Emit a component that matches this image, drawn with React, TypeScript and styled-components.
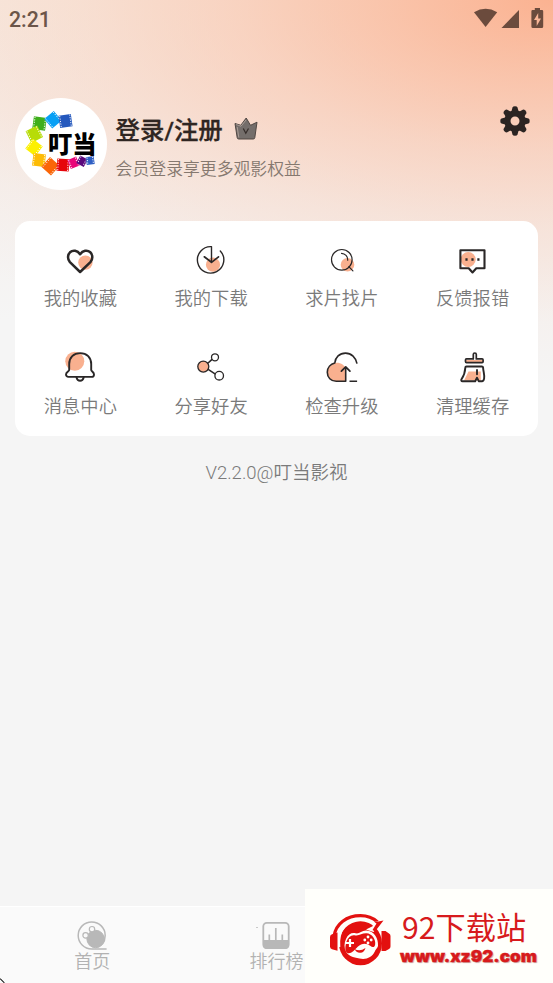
import React from 'react';
import styled, { createGlobalStyle } from 'styled-components';

const INK = '#2a2727';
const PEACH = '#f9b08f';

const GlobalStyle = createGlobalStyle`
  * { box-sizing: border-box; }
  html, body { margin: 0; padding: 0; }
  body { font-family: Roboto, "Noto Sans CJK SC", sans-serif; background: #f5f5f5; overflow: hidden; }
  svg { display: block; flex: none; overflow: visible; }
`;

const Screen = styled.div`
  position: relative;
  display: flex;
  flex-direction: column;
  width: 553px;
  height: 983px;
  overflow: hidden;
  background:
    radial-gradient(ellipse 790px 385px at 550px 0px,
      rgba(252, 164, 125, 0.8) 0%,
      rgba(251, 176, 142, 0.67) 20%,
      rgba(250, 190, 163, 0.53) 40%,
      rgba(248, 206, 186, 0.4) 60%,
      rgba(246, 226, 216, 0.2) 84%,
      rgba(245, 245, 245, 0) 100%),
    linear-gradient(180deg, #f7ebe2 0, #f6ece6 110px, #f5f1ef 210px, #f5f5f5 320px);
`;

const StatusBar = styled.div`
  display: flex;
  justify-content: space-between;
  height: 40px;
  padding: 0 9px;
  color: #6b5549;
`;

const Clock = styled.span`
  font-size: 21.3px;
  font-weight: 500;
  line-height: 39px;
`;

const Profile = styled.header`
  display: flex;
  align-items: flex-start;
  height: 123px;
  margin-top: 58px;
  padding: 0 23px 0 15px;
`;

const Avatar = styled.div`
  width: 92px;
  height: 92px;
  border-radius: 50%;
  background: #fff;
  overflow: hidden;
`;

const Account = styled.div`
  flex: 1;
  padding: 12px 0 0 8.6px;
`;

const NameRow = styled.div`
  display: flex;
  align-items: center;
  gap: 11px;
  height: 36px;
  color: #2f2622;
  font-size: 24.4px;
  font-weight: 500;
  -webkit-text-stroke: 0.3px #2f2622;
  white-space: nowrap;
`;

const Hint = styled.div`
  margin-top: 10px;
  height: 26px;
  line-height: 26px;
  font-size: 16.85px;
  font-weight: 350;
  color: #85786f;
`;

const SettingsSlot = styled.div`
  padding-top: 8px;
`;

const Card = styled.section`
  display: grid;
  grid-template-columns: repeat(4, 1fr);
  grid-template-rows: repeat(2, 107.5px);
  width: 523px;
  height: 215px;
  margin: 0 15px;
  border-radius: 15px;
  background: #fff;
`;

const Action = styled.div`
  display: flex;
  flex-direction: column;
  align-items: center;
  padding-top: 23.5px;
`;

const ActionLabel = styled.span`
  margin-top: 11.5px;
  line-height: 26px;
  font-size: 18.3px;
  font-weight: 350;
  color: #7a7a7a;
`;

const Version = styled.div`
  margin-top: 23px;
  line-height: 28px;
  text-align: center;
  font-size: 18.5px;
  font-weight: 350;
  color: #7a7a7a;
`;

const TabBar = styled.nav`
  display: grid;
  grid-template-columns: repeat(3, 1fr);
  height: 77px;
  margin-top: auto;
  border-top: 1px solid #fff;
  background: #fafafa;
`;

const Tab = styled.div`
  display: flex;
  flex-direction: column;
  align-items: center;
  padding-top: 14px;
  font-size: 18px;
  font-weight: 350;
  line-height: 22px;
  color: #b2b2b2;
`;

const Banner = styled.aside`
  position: absolute;
  right: 0;
  bottom: 0;
  display: flex;
  width: 248px;
  height: 94px;
  padding: 25px 0 0 25px;
  background: #fffffb;
  color: #d71a1c;
`;

const BannerText = styled.div`
  display: flex;
  flex-direction: column;
  padding-left: 9px;
`;

const SiteName = styled.div`
  margin-top: -5px;
  padding-left: 2px;
  font-family: "Noto Sans CJK SC", sans-serif;
  font-size: 30.2px;
  line-height: 34px;
  white-space: nowrap;
`;

const SiteUrl = styled.div`
  width: max-content;
  margin-top: 4px;
  font-family: Inter, sans-serif;
  font-size: 16px;
  font-weight: 900;
  line-height: 18px;
  -webkit-text-stroke: 0.4px #d71a1c;
  text-shadow: 1px 1px 1px #c9a9a5;
  transform: scaleX(1.07);
  transform-origin: left;
`;

const CornerMark = styled.div`
  position: absolute;
  left: 0;
  bottom: 0;
`;

const stroke = { fill: 'none', stroke: INK, strokeLinecap: 'round', strokeLinejoin: 'round' } as const;

const Glyph = ({ children }: { children: React.ReactNode }) => (
  <svg width="30" height="30" viewBox="0 0 30 30">{children}</svg>
);

const HeartIcon = () => (
  <Glyph>
    <circle cx="20.4" cy="17.6" r="7.2" fill={PEACH} />
    <path {...stroke} strokeWidth="2.5" d="M15.1 27 4.9 17.2C2.2 14.2 2.6 9.6 5 7.3c3-2.7 7.4-2 10.1 2 2.7-4 7.2-4.7 10.2-2 2.5 2.3 2.8 6.9.1 9.9z" />
  </Glyph>
);

const DownloadIcon = () => (
  <Glyph>
    <circle cx="17" cy="19.7" r="7.1" fill={PEACH} />
    <path {...stroke} strokeWidth="1.4" d="M15.5 1.7A13.2 13.2 0 1 0 24.3 5.9M15.5 1.7V17" />
    <path {...stroke} strokeWidth="1.7" d="m8.3 11.8 7.2 5.5 7-5.5" />
  </Glyph>
);

const SearchIcon = () => (
  <Glyph>
    <circle cx="20.5" cy="19.8" r="6.8" fill={PEACH} />
    <circle {...stroke} strokeWidth="1.2" cx="14.8" cy="14.8" r="10.3" />
    <path {...stroke} strokeWidth="1.2" d="M14.5 8.3a6.5 6.5 0 0 1 6.2 6.9M21.8 21.7l4.1 4.2" />
  </Glyph>
);

const FeedbackIcon = () => (
  <Glyph>
    <circle cx="10.2" cy="14.5" r="7.5" fill={PEACH} />
    <path {...stroke} strokeWidth="2.1" d="M2.4 5.2h24.1v18.1h-8.2l-3.8 4.2-3.8-4.2H2.4z" />
    <path stroke={INK} strokeWidth="2.5" d="M7.4 14.5h2.2M13.4 14.5h2.2M19.3 14.5h2.2" />
  </Glyph>
);

const BellIcon = () => (
  <Glyph>
    <circle cx="9.8" cy="9.3" r="9.5" fill={PEACH} />
    <path {...stroke} strokeWidth="1.9" d="M4.2 18v-6C4.2 5.6 8.6 1.1 15.2 1.1S26.2 5.6 26.2 12v6c0 1.2 2.8 2.2 2.8 4.4 0 1.4-1 2.5-2.4 2.5H3.4C2 24.9 1 23.8 1 22.4 1 20.2 4.2 19.2 4.2 18z" />
    <path {...stroke} strokeWidth="1.9" d="M11.5 25.5c.5 2 1.8 3.3 3.6 3.3s3.1-1.3 3.6-3.3" />
  </Glyph>
);

const ShareIcon = () => (
  <Glyph>
    <path {...stroke} strokeWidth="1.6" d="m11.5 11.5 4.3-3.8M11.8 17.2l7.2 4.6" />
    <circle cx="7.3" cy="14.6" r="5.5" fill={PEACH} stroke={INK} strokeWidth="1.3" />
    <circle {...stroke} strokeWidth="1.3" cx="19" cy="5.3" r="3.5" />
    <circle {...stroke} strokeWidth="1.3" cx="23.2" cy="23.7" r="4.3" />
  </Glyph>
);

const UpgradeIcon = () => (
  <Glyph>
    <path fill={PEACH} d="M9.7 10.8c4.5 0 8.2 2.5 9.1 6.4v12H9.7A9.2 9.2 0 0 1 9.7 10.8z" />
    <path {...stroke} strokeLinecap="butt" strokeWidth="1.6" d="M30 11.7C29 5.6 24.3 1.1 18.5 1.1 12.5 1.1 8.3 5.2 7.8 11 3.6 12 .3 15.6.3 20.2c0 5.3 3.7 9.1 8.9 9.1h9.5V15.5M22.5 29.3h7.6" />
    <path {...stroke} strokeWidth="1.8" d="m14.4 19.1 4.3-4.2 4.2 4.2" />
  </Glyph>
);

const BroomIcon = () => (
  <Glyph>
    <path fill={PEACH} d="M8 8h17v2.6H8zM10.5 19.5h12.3v9H6z" />
    <path {...stroke} strokeWidth="1.7" d="M15.3 6.9V2.5q0-1.5 1.5-1.5t1.5 1.5v4.4h5.8q1 0 1 1v1.7q0 1-1 1H8.5q-1 0-1-1V7.9q0-1 1-1z" />
    <path {...stroke} strokeWidth="1.9" d="M8.5 14.5h15.3q1.2 0 1.3 1.2c.2 3.9 1.7 7.2 1 10.9-.3 1.7-.9 2.6-2.1 2.6h-3.3l-1.7-3.5-1.8 3.5H4.5c-1.300 0-1.500-1-1-1.900 2.100-3.200 3.600-6.900 3.800-11.600q0-1.200 1.200-1.200zM19 18v4.200" />
  </Glyph>
);

const filmFrames = [
  { x: 24.5, y: 25.5, s: 12, a: 8, c: '#3faf1c' },
  { x: 38, y: 21.7, s: 11.5, a: -40, c: '#08a0f5' },
  { x: 50.5, y: 23, s: 11.5, a: -8, c: '#2458bd' },
  { x: 19.3, y: 36.2, s: 12, a: -27, c: '#b7dc08' },
  { x: 19, y: 49.5, s: 11.5, a: 38, c: '#fcf000' },
  { x: 24, y: 62, s: 11.5, a: 7, c: '#fdbb05' },
  { x: 35.5, y: 68.3, s: 12, a: 42, c: '#fa6608' },
  { x: 48, y: 67, s: 11.2, a: 4, c: '#e6060c' },
  { x: 58.5, y: 64.8, s: 8.5, a: -22, c: '#e90478' },
  { x: 67, y: 63.2, s: 7.5, a: 28, c: '#5a087c' },
  { x: 75.2, y: 62.6, s: 7, a: -8, c: '#2e5fc4' },
];

const LogoText = styled.text`
  font-family: "Noto Sans CJK SC", sans-serif;
  font-size: 24px;
  font-weight: 900;
`;

const AvatarLogo = () => (
  <svg width="92" height="92" viewBox="0 0 92 92">
    {filmFrames.map((f) => (
      <g key={f.x} transform={`translate(${f.x} ${f.y}) rotate(${f.a})`}>
        <rect x={-f.s / 2 - 0.5} y={-f.s / 2 - 0.5} width={f.s + 1} height={f.s + 1} fill={f.c} />
        <path
          d={`M${-f.s / 2 + 0.7} ${-f.s / 2}V${f.s / 2}M${f.s / 2 - 0.7} ${-f.s / 2}V${f.s / 2}`}
          stroke="#fff"
          strokeWidth="0.9"
          strokeDasharray="1.2 1.3"
        />
      </g>
    ))}
    <LogoText x="33" y="54.5" textLength="48.5" lengthAdjust="spacingAndGlyphs">叮当</LogoText>
  </svg>
);

const CrownIcon = () => (
  <svg width="24" height="23" viewBox="0 0 24 23">
    <path d="M1 6.5 6.8 8.3 12.2 1l4.3 7.3L23 5.2l-2.2 15.5q-.2 1.3-1.5 1.3H4.7q-1.3 0-1.5-1.3z" fill="#746e6b" stroke="#504743" strokeWidth="1" strokeLinejoin="round" />
    <path d="M2.2 7.5 7 9.2 12 3M3.2 10l1.6 10.5" fill="none" stroke="#b9aaa2" strokeWidth=".8" />
    <path d="m9.3 11.5 2.5 4.8 2.7-4.8" fill="none" stroke="#352d2a" strokeWidth="1.2" />
  </svg>
);

const GearIcon = () => (
  <svg width="30" height="30" viewBox="-15 -15 30 30">
    <circle r="7.6" fill="none" stroke="#2b2422" strokeWidth="6.2" />
    {[0, 45, 90, 135, 180, 225, 270, 315].map((a) => (
      <path key={a} transform={`rotate(${a})`} d="M-3.8-8.8-2.5-13.5Q-2.1-14.7 0-14.7T2.5-13.5L3.8-8.8z" fill="#2b2422" />
    ))}
  </svg>
);

const StatusIcons = () => (
  <svg width="73" height="40" viewBox="471 0 73 40" fill="#6b4b3d">
    <path d="M474 12.2Q485.6 5.5 497.2 12.2L485.6 27z" />
    <path d="M519 10v18h-17.5z" />
    <path fillRule="evenodd" d="M534.8 8h5.2v2h2q1.200 0 1.200 1.200v15.300q0 1.500-1.500 1.500h-8.800q-1.500 0-1.500-1.500V11.200q0-1.200 1.200-1.200h2.200zM538.200 13l-4.200 7h2.700v6l4.300-7.500h-2.800z" />
  </svg>
);

const ReelIcon = () => (
  <svg width="30" height="30" viewBox="0 0 30 30" fill="none" stroke="#b8b8b8">
    <path strokeWidth="1.5" d="M29.6 27.9H14.7a13.5 13.5 0 1 1 13.5-13.5c0 3.5-1.1 6.5-3 9" />
    <circle cx="18.6" cy="18" r="8.7" fill="#b8b8b8" />
    <circle cx="15" cy="8.2" r="2.7" fill="#fafafa" strokeWidth="1.2" />
    <circle cx="8.6" cy="14.4" r="2.7" fill="#fafafa" strokeWidth="1.2" />
  </svg>
);

const RankIcon = () => (
  <svg width="30" height="30" viewBox="0 0 30 30" fill="none" stroke="#b8b8b8">
    <rect x="2.3" y="1.8" width="25.4" height="25.3" rx="3.5" strokeWidth="1.8" />
    <path d="M2 19h26v5q0 4-4 4H6q-4 0-4-4z" fill="#b8b8b8" stroke="none" />
    <path strokeWidth="1.7" d="M8.3 19v-5.5M14.8 19V7M21.3 19v-5.5" />
    <circle cx="-4" cy="6.5" r=".5" fill="#777" stroke="none" />
  </svg>
);

const GamepadLogo = () => (
  <svg width="61" height="52" viewBox="0 0 61 52">
    <ellipse cx="30.5" cy="29.3" rx="21.5" ry="22" fill="#e3110f" />
    <path d="M9 33C7.5 17 15.5 5.5 30.5 5.5c6 0 10.5 1.5 14 4.5" fill="none" stroke="#fffffb" strokeWidth="2.6" />
    <path d="M4 22C6 9.5 16.5 1.7 30.5 1.7c7 0 12.5 2.2 17 6.3" fill="none" stroke="#e3110f" strokeWidth="3.2" />
    <path d="M36 15.5 43 12l-2-3.5L54 6.5 43.5 18z" fill="#fffffb" />
    <path d="m42.5 16 4-6.5-2-1.200L53.500 6.500 45 17.500z" fill="#e3110f" />
    <path d="M7.5 18.5v18.2L2 35.2Q0 34.5 0 32.5V23q0-2 2-2.7z" fill="#e3110f" />
    <path d="M51.5 17h4l3.500 2.500q1.500.8 1.500 2.500v10.500q0 1.700-1.500 2.500L55.500 37h-4z" fill="#e3110f" />
    <path d="M16 25c2-5 6-6.700 9.500-5.700 4 1 6-3.100 11-2.800 7.500.5 12 7.500 11.500 15.500-.5 2.500-2.500 3.300-3.200 5.500C42 43.500 36 46 29.500 44.500 23 43.500 18 41.500 16 37.500 14 34 14 29 16 25z" fill="#fffffb" />
    <path d="M16.500 27.500C18 23 21 20.700 24.500 21.200c5 1 7-2.200 12-2 5.500.3 9.300 6 8.700 11-.5 3.600-2.900 3.500-5 1.500-4-3-8.500-2.700-12.500 1-3.700 3.800-7.200 8-10.700 6-2.500-2-1.700-6.700-.5-11.200z" fill="#e3110f" />
    <path d="M20 25v8M16 29h8" stroke="#fffffb" strokeWidth="2.2" />
    <g fill="#fffffb"><circle cx="38" cy="23" r="1.4" /><circle cx="34.8" cy="26" r="1.4" /><circle cx="41.2" cy="26" r="1.4" /><circle cx="38" cy="29" r="1.4" /></g>
    <path d="M24.5 35q5.500 3 11-1-1.500 5-5.500 4.700-4 0-5.500-3.700z" fill="#e3110f" />
  </svg>
);

const actions = [
  { label: '我的收藏', Icon: HeartIcon },
  { label: '我的下载', Icon: DownloadIcon },
  { label: '求片找片', Icon: SearchIcon },
  { label: '反馈报错', Icon: FeedbackIcon },
  { label: '消息中心', Icon: BellIcon },
  { label: '分享好友', Icon: ShareIcon },
  { label: '检查升级', Icon: UpgradeIcon },
  { label: '清理缓存', Icon: BroomIcon },
];

export default function App() {
  return (
    <Screen lang="zh-CN">
      <GlobalStyle />
      <StatusBar>
        <Clock>2:21</Clock>
        <StatusIcons />
      </StatusBar>
      <Profile>
        <Avatar><AvatarLogo /></Avatar>
        <Account>
          <NameRow><span>登录/注册</span><CrownIcon /></NameRow>
          <Hint>会员登录享更多观影权益</Hint>
        </Account>
        <SettingsSlot><GearIcon /></SettingsSlot>
      </Profile>
      <Card>
        {actions.map(({ label, Icon }) => (
          <Action key={label}>
            <Icon />
            <ActionLabel>{label}</ActionLabel>
          </Action>
        ))}
      </Card>
      <Version>V2.2.0@叮当影视</Version>
      <TabBar>
        <Tab><ReelIcon />首页</Tab>
        <Tab><RankIcon />排行榜</Tab>
      </TabBar>
      <Banner>
        <GamepadLogo />
        <BannerText>
          <SiteName>92下载站</SiteName>
          <SiteUrl>www.xz92.com</SiteUrl>
        </BannerText>
      </Banner>
      <CornerMark>
        <svg width="5" height="5" viewBox="0 0 5 5"><path d="M0 1h1v1h1v1h1v1h1v1" fill="none" stroke="#222" strokeWidth="1" /></svg>
      </CornerMark>
    </Screen>
  );
}
